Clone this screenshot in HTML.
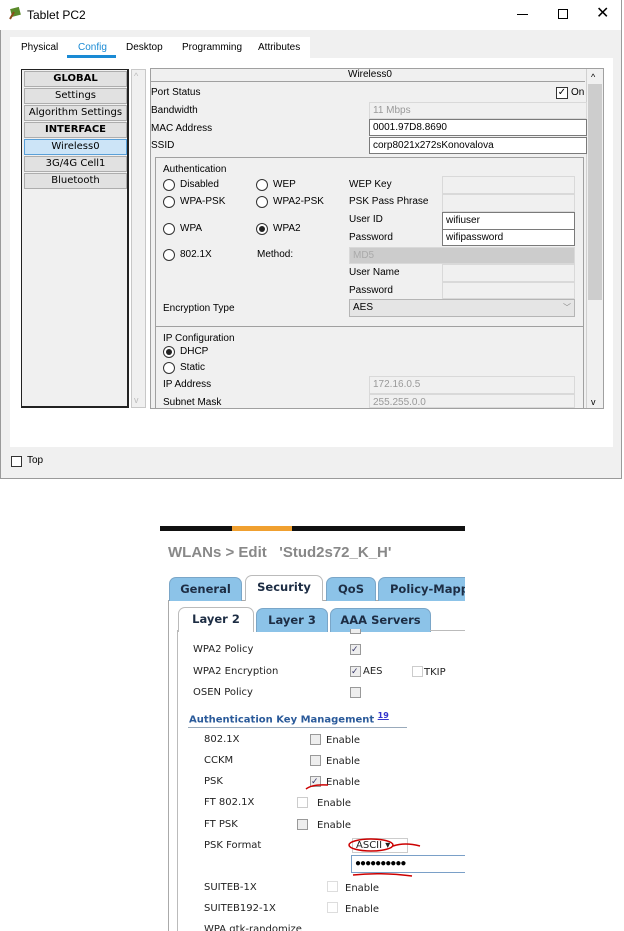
<!DOCTYPE html>
<html><head><meta charset="utf-8"><style>
*{margin:0;padding:0;box-sizing:border-box}
body{width:624px;height:931px;background:#fff;position:relative;overflow:hidden;font-family:"Liberation Sans",sans-serif;font-size:10px;color:#000}
.a{position:absolute}
.t{position:absolute;white-space:nowrap;line-height:12px}
.f{position:absolute;border:1px solid #d9d9d9;background:#f0f0f0;font-size:10px;padding-left:3px;line-height:15px;color:#999}
.w{background:#fff;border-color:#7a7a7a;color:#000}
.rad{position:absolute;width:12px;height:12px;border:1px solid #333;border-radius:50%;background:#fff}
.rad.on::after{content:"";position:absolute;left:2px;top:2px;width:6px;height:6px;border-radius:50%;background:#222}
.it{position:absolute;left:2px;width:103px;height:16px;background:#e1e1e1;border:1px solid #adadad;text-align:center;font-family:"DejaVu Sans",sans-serif;font-size:10px;line-height:14px}
.v{font-family:"DejaVu Sans",sans-serif;font-size:10px;color:#222}
.cb{position:absolute;width:11px;height:11px;border:1px solid #999;background:#eee}
.tab{position:absolute;height:24px;border:1px solid #7aa6c8;border-bottom:none;border-radius:7px 7px 0 0;background:#8cc3e8;font-family:"DejaVu Sans",sans-serif;font-weight:bold;font-size:11.5px;text-align:center;line-height:22px;color:#1d2d44;white-space:nowrap;overflow:hidden}
#clip{position:absolute;left:0;top:0;width:465px;height:931px;overflow:hidden}
</style></head><body>
<div class="a" style="left:0;top:0;width:622px;height:479px;background:#f0f0f0;border:1px solid #9a9a9a;border-top:none"></div>
<div class="a" style="left:0;top:0;width:621px;height:30px;background:#fff"></div>
<div class="a" style="left:8px;top:6px;width:14px;height:14px">
<svg width="14" height="14"><rect x="3" y="2" width="9" height="8" fill="#5a8a2a" transform="rotate(-15 7 6)"/><path d="M2 13 L6 6" stroke="#8a4a1a" stroke-width="2"/></svg></div>
<div class="t" style="left:27px;top:8px;font-size:12px;line-height:14px">Tablet PC2</div>
<div class="a" style="left:517px;top:14px;width:11px;height:1px;background:#000"></div>
<div class="a" style="left:558px;top:9px;width:10px;height:10px;border:1px solid #000"></div>
<div class="t" style="left:596px;top:5px;font-size:16px;line-height:18px">✕</div>
<div class="a" style="left:10px;top:37px;width:300px;height:21px;background:#fff"></div>
<div class="t" style="left:21px;top:42px">Physical</div>
<div class="t" style="left:78px;top:42px;color:#1a8ad4">Config</div>
<div class="a" style="left:67px;top:55px;width:49px;height:3px;background:#1a8ad4"></div>
<div class="t" style="left:126px;top:42px">Desktop</div>
<div class="t" style="left:182px;top:42px">Programming</div>
<div class="t" style="left:258px;top:42px">Attributes</div>
<div class="a" style="left:10px;top:58px;width:603px;height:389px;background:#fff"></div>
<div class="a" style="left:21px;top:69px;width:108px;height:339px;background:#f0f0f0;border:1px solid #222;border-right:2px solid #222;border-bottom:2px solid #222">
<div class="it" style="top:1px;font-weight:bold">GLOBAL</div>
<div class="it" style="top:18px">Settings</div>
<div class="it" style="top:35px">Algorithm Settings</div>
<div class="it" style="top:52px;font-weight:bold">INTERFACE</div>
<div class="it" style="top:69px;background:#cce4f7;border-color:#5aa0d8">Wireless0</div>
<div class="it" style="top:86px">3G/4G Cell1</div>
<div class="it" style="top:103px">Bluetooth</div>
</div>
<div class="a" style="left:131px;top:69px;width:15px;height:339px;background:#f0f0f0;border:1px solid #c8c8c8"></div>
<div class="t" style="left:134px;top:70px;color:#bbb;font-size:9px">^</div>
<div class="t" style="left:134px;top:394px;color:#bbb;font-size:9px">v</div>
<div class="a" style="left:150px;top:68px;width:454px;height:341px;background:#f0f0f0;border:1px solid #a0a0a0"></div>
<div class="a" style="left:151px;top:81px;width:434px;height:1px;background:#a0a0a0"></div>
<div class="t" style="left:348px;top:69px">Wireless0</div>
<div class="a" style="left:586px;top:69px;width:17px;height:339px;border-left:1px solid #d0d0d0"></div>
<div class="a" style="left:588px;top:84px;width:14px;height:216px;background:#cdcdcd"></div>
<div class="t" style="left:591px;top:71px;font-size:9px">^</div>
<div class="t" style="left:591px;top:396px;font-size:9px">v</div>
<div class="t" style="left:151px;top:87px">Port Status</div>
<div class="t" style="left:151px;top:105px">Bandwidth</div>
<div class="t" style="left:151px;top:123px">MAC Address</div>
<div class="t" style="left:151px;top:140px">SSID</div>
<div class="a" style="left:556px;top:87px;width:12px;height:12px;border:1px solid #333;background:#fff;font-size:10px;line-height:10px;text-align:center">✓</div>
<div class="t" style="left:571px;top:87px">On</div>
<div class="f" style="left:369px;top:102px;width:218px;height:17px">11 Mbps</div>
<div class="f w" style="left:369px;top:119px;width:218px;height:17px">0001.97D8.8690</div>
<div class="f w" style="left:369px;top:137px;width:218px;height:17px">corp8021x272sKonovalova</div>
<div class="a" style="left:155px;top:157px;width:429px;height:170px;border:1px solid #a0a0a0"></div>
<div class="t" style="left:163px;top:164px">Authentication</div>
<div class="rad" style="left:163px;top:179px"></div><div class="t" style="left:180px;top:179px">Disabled</div>
<div class="rad" style="left:256px;top:179px"></div><div class="t" style="left:273px;top:179px">WEP</div>
<div class="rad" style="left:163px;top:196px"></div><div class="t" style="left:180px;top:196px">WPA-PSK</div>
<div class="rad" style="left:256px;top:196px"></div><div class="t" style="left:273px;top:196px">WPA2-PSK</div>
<div class="rad" style="left:163px;top:223px"></div><div class="t" style="left:180px;top:223px">WPA</div>
<div class="rad on" style="left:256px;top:223px"></div><div class="t" style="left:273px;top:223px">WPA2</div>
<div class="rad" style="left:163px;top:249px"></div><div class="t" style="left:180px;top:249px">802.1X</div>
<div class="t" style="left:257px;top:249px">Method:</div>
<div class="t" style="left:163px;top:303px">Encryption Type</div>
<div class="t" style="left:349px;top:179px">WEP Key</div>
<div class="t" style="left:349px;top:196px">PSK Pass Phrase</div>
<div class="t" style="left:349px;top:214px">User ID</div>
<div class="t" style="left:349px;top:232px">Password</div>
<div class="t" style="left:349px;top:267px">User Name</div>
<div class="t" style="left:349px;top:285px">Password</div>
<div class="f" style="left:442px;top:176px;width:133px;height:18px"></div>
<div class="f" style="left:442px;top:194px;width:133px;height:18px"></div>
<div class="f w" style="left:442px;top:212px;width:133px;height:18px">wifiuser</div>
<div class="f w" style="left:442px;top:229px;width:133px;height:17px">wifipassword</div>
<div class="f" style="left:349px;top:247px;width:226px;height:17px;background:#ccc;color:#aaa">MD5</div>
<div class="f" style="left:442px;top:264px;width:133px;height:18px"></div>
<div class="f" style="left:442px;top:282px;width:133px;height:17px"></div>
<div class="f" style="left:349px;top:299px;width:226px;height:18px;background:#e5e5e5;border-color:#b5b5b5;color:#000">AES</div>
<div class="t" style="left:563px;top:302px;color:#888;font-size:8px">﹀</div>
<div class="a" style="left:155px;top:326px;width:429px;height:83px;border:1px solid #a0a0a0;border-bottom:none"></div>
<div class="t" style="left:163px;top:333px">IP Configuration</div>
<div class="rad on" style="left:163px;top:346px"></div><div class="t" style="left:180px;top:346px">DHCP</div>
<div class="rad" style="left:163px;top:362px"></div><div class="t" style="left:180px;top:362px">Static</div>
<div class="t" style="left:163px;top:379px">IP Address</div>
<div class="t" style="left:163px;top:397px">Subnet Mask</div>
<div class="f" style="left:369px;top:376px;width:206px;height:18px">172.16.0.5</div>
<div class="f" style="left:369px;top:394px;width:206px;height:14px">255.255.0.0</div>
<div class="a" style="left:11px;top:456px;width:11px;height:11px;border:1px solid #333;background:#fff"></div>
<div class="t" style="left:27px;top:455px">Top</div>

<div id="clip">
<div class="a" style="left:160px;top:526px;width:305px;height:5px;background:#111"></div>
<div class="a" style="left:232px;top:526px;width:60px;height:5px;background:#f0a030"></div>
<div class="t" style="left:168px;top:545px;font-size:15px;line-height:16px;font-weight:bold;color:#888">WLANs &gt; Edit &nbsp; 'Stud2s72_K_H'</div>
<div class="a" style="left:168px;top:600px;width:297px;height:331px;border-left:1px solid #aaa;border-top:1px solid #aaa"></div>
<div class="tab" style="left:169px;top:577px;width:73px">General</div>
<div class="tab" style="left:245px;top:575px;width:78px;height:26px;background:#fff;border-color:#bbb">Security</div>
<div class="tab" style="left:326px;top:577px;width:50px">QoS</div>
<div class="tab" style="left:378px;top:577px;width:100px;text-align:left;padding-left:11px">Policy-Mapping</div>
<div class="a" style="left:177px;top:630px;width:288px;height:301px;border-left:1px solid #bbb"></div>
<div class="tab" style="left:178px;top:607px;width:76px;height:25px;background:#fff;border-color:#bbb">Layer 2</div>
<div class="tab" style="left:256px;top:608px;width:72px">Layer 3</div>
<div class="tab" style="left:330px;top:608px;width:101px">AAA Servers</div>
<div class="a" style="left:430px;top:630px;width:35px;height:1px;background:#bbb"></div>
<div class="cb" style="left:350px;top:629px;height:5px;border-top:none"></div>
<div class="t v" style="left:193px;top:644px">WPA2 Policy</div>
<div class="cb" style="left:350px;top:644px;font-size:9px;line-height:9px;color:#336">✓</div>
<div class="t v" style="left:193px;top:666px">WPA2 Encryption</div>
<div class="cb" style="left:350px;top:666px;font-size:9px;line-height:9px;color:#336">✓</div>
<div class="t v" style="left:363px;top:666px">AES</div>
<div class="cb" style="left:412px;top:666px;background:#fff;border-color:#ccc"></div>
<div class="t v" style="left:424px;top:667px">TKIP</div>
<div class="t v" style="left:193px;top:687px">OSEN Policy</div>
<div class="cb" style="left:350px;top:687px"></div>
<div class="t v" style="left:189px;top:710px;font-weight:bold;color:#2a5a9a">Authentication Key Management <sup style="font-size:8px;color:#33c;text-decoration:underline">19</sup></div>
<div class="a" style="left:188px;top:727px;width:219px;height:1px;background:#9ab"></div>
<div class="t v" style="left:204px;top:734px">802.1X</div><div class="cb" style="left:310px;top:734px"></div><div class="t v" style="left:326px;top:735px">Enable</div>
<div class="t v" style="left:204px;top:755px">CCKM</div><div class="cb" style="left:310px;top:755px"></div><div class="t v" style="left:326px;top:756px">Enable</div>
<div class="t v" style="left:204px;top:776px">PSK</div><div class="cb" style="left:310px;top:776px;font-size:9px;line-height:9px;color:#336">✓</div><div class="t v" style="left:326px;top:777px">Enable</div>
<div class="t v" style="left:204px;top:797px">FT 802.1X</div><div class="cb" style="left:297px;top:797px;background:#fff;border-color:#ccc"></div><div class="t v" style="left:317px;top:798px">Enable</div>
<div class="t v" style="left:204px;top:819px">FT PSK</div><div class="cb" style="left:297px;top:819px"></div><div class="t v" style="left:317px;top:820px">Enable</div>
<div class="t v" style="left:204px;top:840px">PSK Format</div>
<div class="a v" style="left:352px;top:838px;width:56px;height:15px;border:1px solid #ccc;font-size:10px;line-height:13px;padding-left:3px">ASCII ▾</div>
<div class="a" style="left:351px;top:855px;width:114px;height:18px;border:1px solid #7aa0c8;border-right:none;background:#fff;font-size:10px;line-height:15px;padding-left:3px;letter-spacing:-1px">●●●●●●●●●●</div>
<svg class="a" style="left:0;top:0" width="624" height="931"><g fill="none" stroke="#c00" stroke-width="1.5"><path d="M306 789 Q312 784 328 785"/><ellipse cx="371" cy="845" rx="22" ry="6"/><path d="M393 846 Q405 842 420 846"/><path d="M353 875 Q380 872 412 876"/></g></svg>
<div class="t v" style="left:204px;top:882px">SUITEB-1X</div><div class="cb" style="left:327px;top:881px;background:#fff;border-color:#ddd"></div><div class="t v" style="left:345px;top:883px">Enable</div>
<div class="t v" style="left:204px;top:903px">SUITEB192-1X</div><div class="cb" style="left:327px;top:902px;background:#fff;border-color:#ddd"></div><div class="t v" style="left:345px;top:904px">Enable</div>
<div class="t v" style="left:204px;top:924px">WPA gtk-randomize</div>
</div>
</body></html>
